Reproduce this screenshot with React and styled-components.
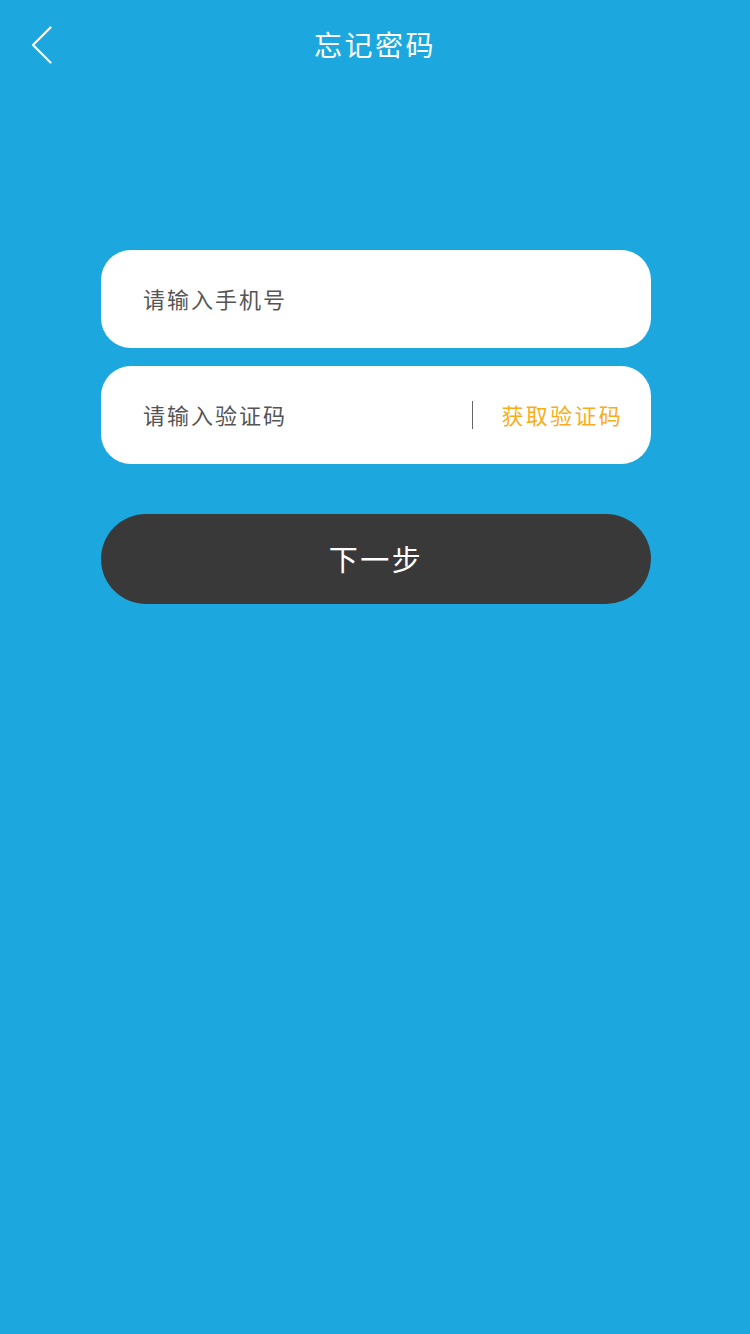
import styled, { createGlobalStyle } from "styled-components";

const GlobalStyle = createGlobalStyle`
  html, body {
    margin: 0;
    padding: 0;
    background: #1ca8de;
  }
  * {
    box-sizing: border-box;
  }
  body {
    font-family: "Noto Sans CJK SC", "Noto Sans", sans-serif;
  }
`;

const App = () => {
  return (
    <Page>
      <GlobalStyle />
      <Header>
        <BackBtn aria-label="back">
          <svg width="22" height="38" viewBox="0 0 22 38" fill="none">
            <path
              d="M19.5 1.5 L2 19 L19.5 36.5"
              stroke="#fff"
              strokeWidth="2.2"
              strokeLinecap="round"
              strokeLinejoin="round"
            />
          </svg>
        </BackBtn>
        <Title>忘记密码</Title>
      </Header>
      <Form>
        <Field>
          <Input placeholder="请输入手机号" />
        </Field>
        <Field>
          <Input placeholder="请输入验证码" />
          <Divider />
          <CodeBtn>获取验证码</CodeBtn>
        </Field>
        <NextBtn>下一步</NextBtn>
      </Form>
    </Page>
  );
};

export default App;

const Page = styled.div`
  min-height: 1334px;
  background: #1ca8de;
  display: flex;
  flex-direction: column;
`;

const Header = styled.div`
  position: relative;
  height: 88px;
  display: flex;
  align-items: center;
  justify-content: center;
`;

const BackBtn = styled.button`
  position: absolute;
  left: 31px;
  top: 26px;
  padding: 0;
  background: none;
  border: none;
  display: flex;
  cursor: pointer;
`;

const Title = styled.h1`
  margin: 0;
  font-size: 28px;
  font-weight: 400;
  letter-spacing: 2.5px;
  color: #fff;
`;

const Form = styled.div`
  width: 550px;
  margin: 162px 0 0 101px;
  display: flex;
  flex-direction: column;
  gap: 18px;
`;

const Field = styled.div`
  height: 98px;
  border-radius: 30px;
  background: #fff;
  display: flex;
  align-items: center;
  padding: 0 28px 0 40px;
`;

const Input = styled.input`
  flex: 1;
  min-width: 0;
  border: none;
  outline: none;
  background: transparent;
  font-family: inherit;
  font-size: 22px;
  letter-spacing: 2px;
  color: #333;
  margin-top: -2px;

  &::placeholder {
    color: #555;
  }
`;

const Divider = styled.span`
  width: 1px;
  height: 28px;
  background: #666;
  margin-right: 28px;
`;

const CodeBtn = styled.span`
  font-size: 22px;
  letter-spacing: 2.3px;
  color: #f9ad1b;
  margin-top: -2px;
  cursor: pointer;
`;

const NextBtn = styled.button`
  margin-top: 32px;
  height: 90px;
  border: none;
  border-radius: 45px;
  background: #393939;
  color: #fff;
  font-family: inherit;
  font-size: 29px;
  letter-spacing: 2.5px;
  padding: 0 0 2px;
  cursor: pointer;
`;
